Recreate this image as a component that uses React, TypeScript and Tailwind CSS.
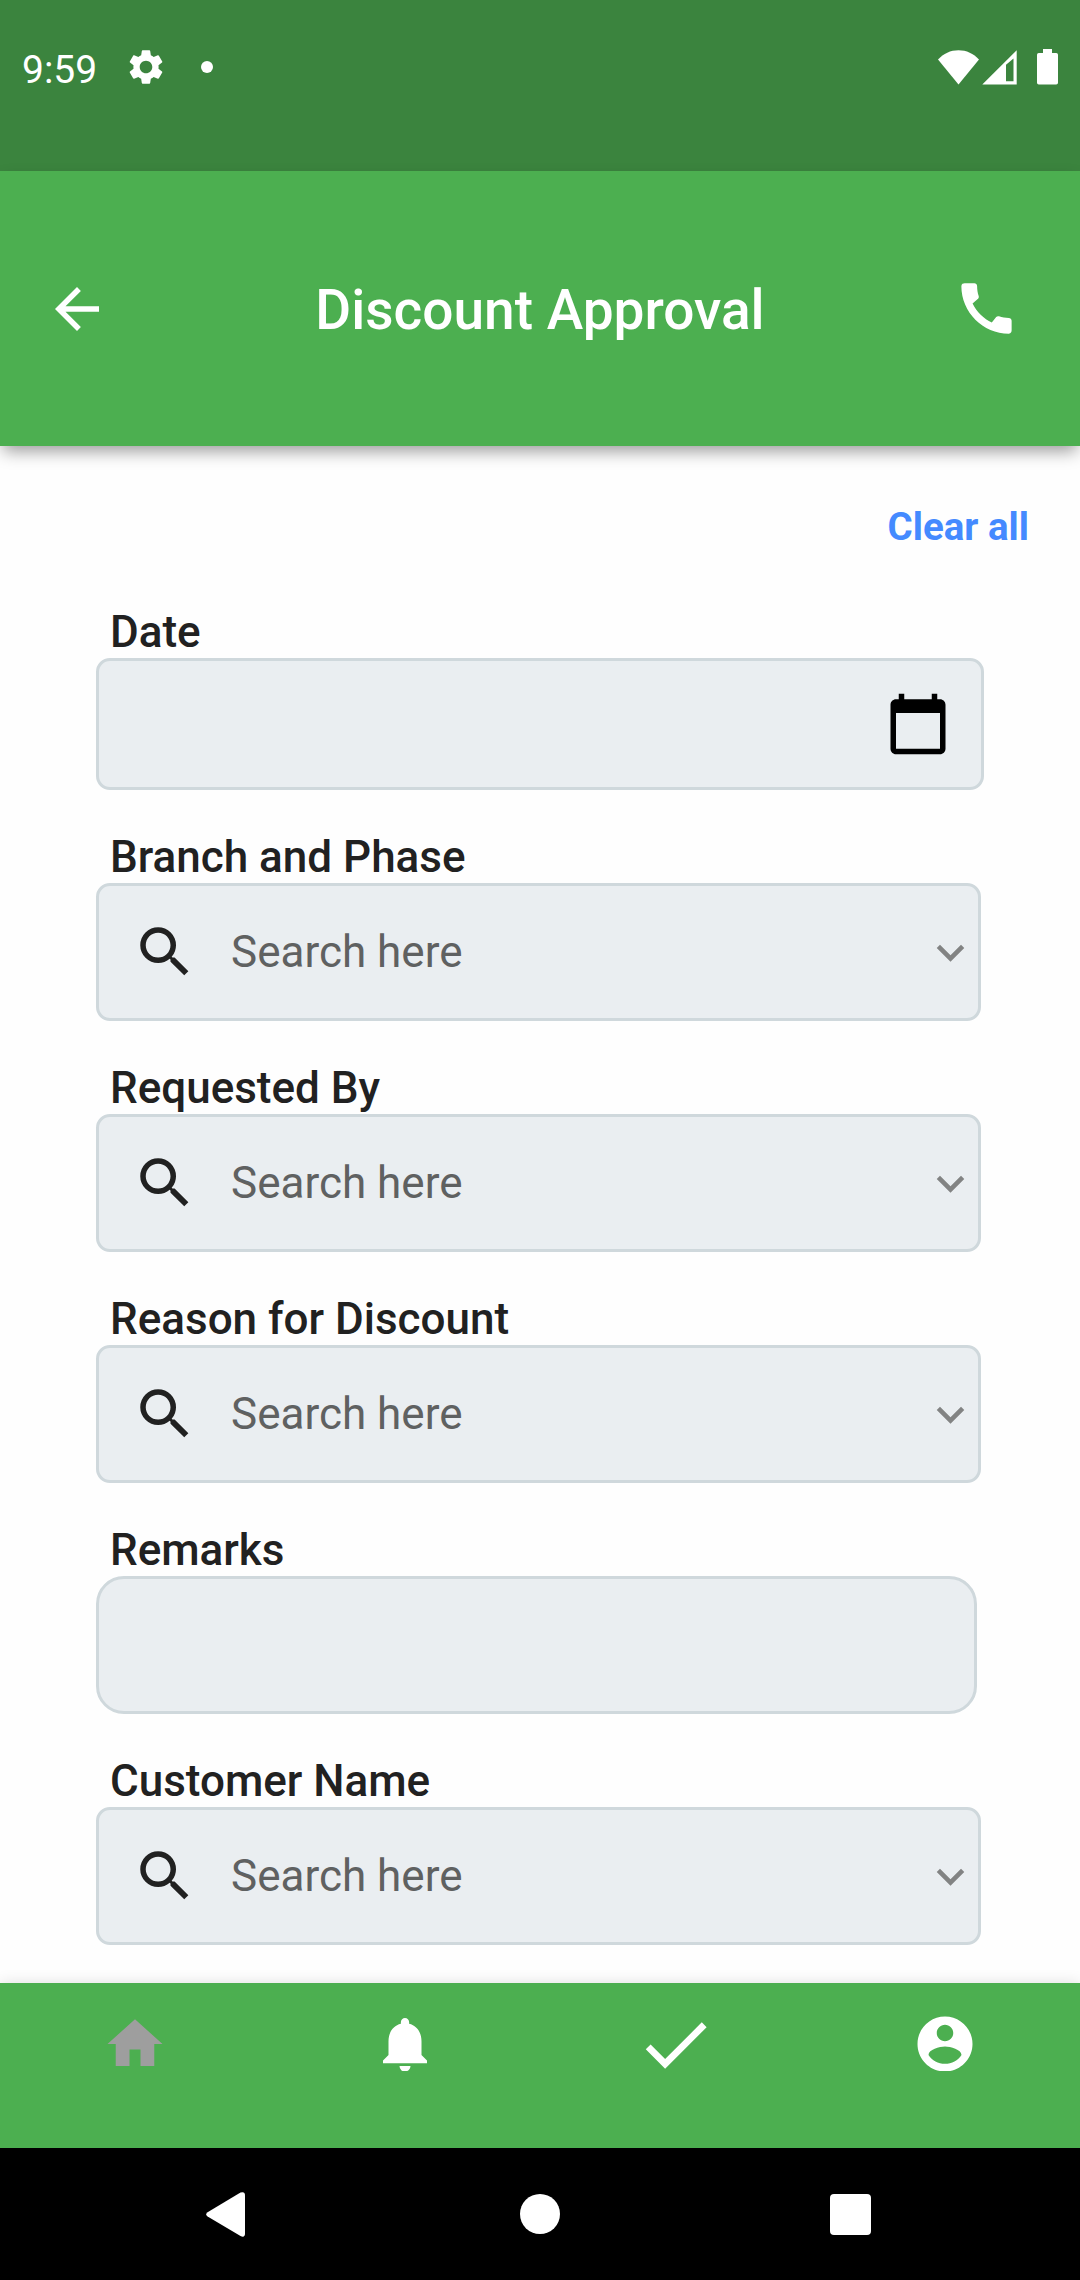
import {
  MdArrowBack,
  MdCalendarToday,
  MdCall,
  MdDone,
  MdHome,
  MdKeyboardArrowDown,
  MdNotifications,
  MdSearch,
  MdSettings,
} from "react-icons/md";

function StatusBar() {
  return (
    <div className="flex h-[171px] items-start justify-between bg-[#3b843e] pl-[22px] pr-[22px] pt-[46px] text-white">
      <div className="flex h-[42px] items-center">
        <span className="w-[103px] pt-[5px] text-[39px] leading-[42px]">9:59</span>
        <MdSettings className="size-[42px]" />
        <span className="ml-[34px] size-3 rounded-full bg-white" />
      </div>
      <div className="flex h-[42px] items-start pt-[3px]">
        <svg className="mt-px h-[35px] w-[41px]" viewBox="0 0 41 35" fill="currentColor">
          <path d="M0 9.6C5.500 3.600 12.500.3 20.500.3S35.500 3.600 41 9.600L20.500 34.500Z" />
        </svg>
        <svg className="ml-[3px] mt-px h-[35px] w-[35px]" viewBox="0 0 35 35" fill="currentColor">
          <path fillRule="evenodd" d="M.3 34.600 34.700.3V34.600ZM24 14.800V31.300H31.500V8.500Z" />
        </svg>
        <svg className="ml-5 h-9 w-[21px]" viewBox="0 0 21 36" fill="currentColor">
          <path d="M6 0H15V4H19.200Q21 4 21 5.800V33.800Q21 35.600 19.200 35.600H1.800Q0 35.600 0 33.800V5.800Q0 4 1.800 4H6Z" />
        </svg>
      </div>
    </div>
  );
}

function AppBar() {
  return (
    <header className="relative z-10 flex h-[275px] items-center justify-between bg-[#4caf50] pl-11 pr-[60px] text-white shadow-[0_8px_16px_-3px_rgba(0,0,0,0.4)]">
      <MdArrowBack className="size-[66px]" />
      <h1 className="ml-[17px] pt-[2px] text-[55px] font-medium leading-[64px]">Discount Approval</h1>
      <MdCall className="size-[67px]" />
    </header>
  );
}

function Label({ children }: { children: string }) {
  return (
    <label className="block pl-[14px] text-[44px] font-medium leading-[52px] text-[#212121]">
      {children}
    </label>
  );
}

function SearchField({ label }: { label: string }) {
  return (
    <div>
      <Label>{label}</Label>
      <div className="flex h-[138px] w-[885px] items-center rounded-[14px] border-3 border-[#cfd8dc] bg-[#eaeef1] pl-[33px]">
        <MdSearch className="size-[66px] text-[#212121]" />
        <span className="ml-[33px] flex-1 text-[44px] leading-[52px] text-[#5f6161]">Search here</span>
        <MdKeyboardArrowDown className="size-[55px] text-[#828383]" />
      </div>
    </div>
  );
}

function AccountIcon() {
  return (
    <svg className="size-[66px] [clip-path:inset(0_0_6px_0)]" viewBox="0 0 24 24" fill="currentColor">
      <path d="M12 2C6.480 2 2 6.480 2 12s4.480 10 10 10 10-4.480 10-10S17.520 2 12 2zm0 3c1.660 0 3 1.340 3 3s-1.340 3-3 3-3-1.340-3-3 1.340-3 3-3zm0 14.200c-2.500 0-4.710-1.280-6-3.220.030-1.990 4-3.080 6-3.080 1.990 0 5.970 1.090 6 3.080-1.290 1.940-3.500 3.220-6 3.220z" />
    </svg>
  );
}

function BottomNav() {
  return (
    <nav className="relative grid h-[165px] grid-cols-4 items-start justify-items-center bg-[#4caf50] pt-[28px] text-white shadow-[0_0_14px_rgba(0,0,0,0.12)]">
      <span className="flex size-[66px] items-center justify-center">
        <MdHome className="size-[66px] text-[#9e9e9e]" />
      </span>
      <span className="flex size-[66px] items-center justify-center">
        <MdNotifications className="size-[66px] [clip-path:inset(0_0_6px_0)]" />
      </span>
      <span className="flex size-[66px] items-center justify-center">
        <MdDone className="size-[83px] shrink-0" />
      </span>
      <span className="flex size-[66px] items-center justify-center">
        <AccountIcon />
      </span>
    </nav>
  );
}

function SystemNav() {
  return (
    <div className="relative flex h-[132px] items-center justify-between bg-black pl-[206px] pr-[209px] text-white">
      <svg className="h-[45px] w-[39px]" viewBox="0 0 39 45" fill="currentColor">
        <path d="M34.500.6Q39-1 39 3.500V41.500Q39 46 34.500 44.100L1.600 24.600Q-1.200 22.400 1.600 20.200Z" />
      </svg>
      <span className="ml-[5px] size-10 rounded-full bg-white" />
      <span className="size-[41px] rounded-[4px] bg-white" />
    </div>
  );
}

export default function App() {
  return (
    <div className="flex h-[2280px] w-[1080px] flex-col overflow-hidden bg-[#fefefe] font-['Roboto',sans-serif]">
      <StatusBar />
      <AppBar />
      <main className="flex-1 pl-24 pt-[58px]">
        <div className="pr-[51px] text-right text-[38.5px] font-bold leading-[45px] text-[#448aff]">
          Clear all
        </div>
        <form className="mt-[57px] flex flex-col gap-[41px]">
          <div>
            <Label>Date</Label>
            <div className="flex h-[132px] w-[888px] items-center justify-end rounded-[14px] border-3 border-[#cfd8dc] bg-[#eaeef1] pr-[30px]">
              <MdCalendarToday className="size-[66px] text-black" />
            </div>
          </div>
          <SearchField label="Branch and Phase" />
          <SearchField label="Requested By" />
          <SearchField label="Reason for Discount" />
          <div>
            <Label>Remarks</Label>
            <div className="h-[138px] w-[881px] rounded-[28px] border-3 border-[#cfd8dc] bg-[#eaeef1]" />
          </div>
          <SearchField label="Customer Name" />
        </form>
      </main>
      <BottomNav />
      <SystemNav />
    </div>
  );
}
